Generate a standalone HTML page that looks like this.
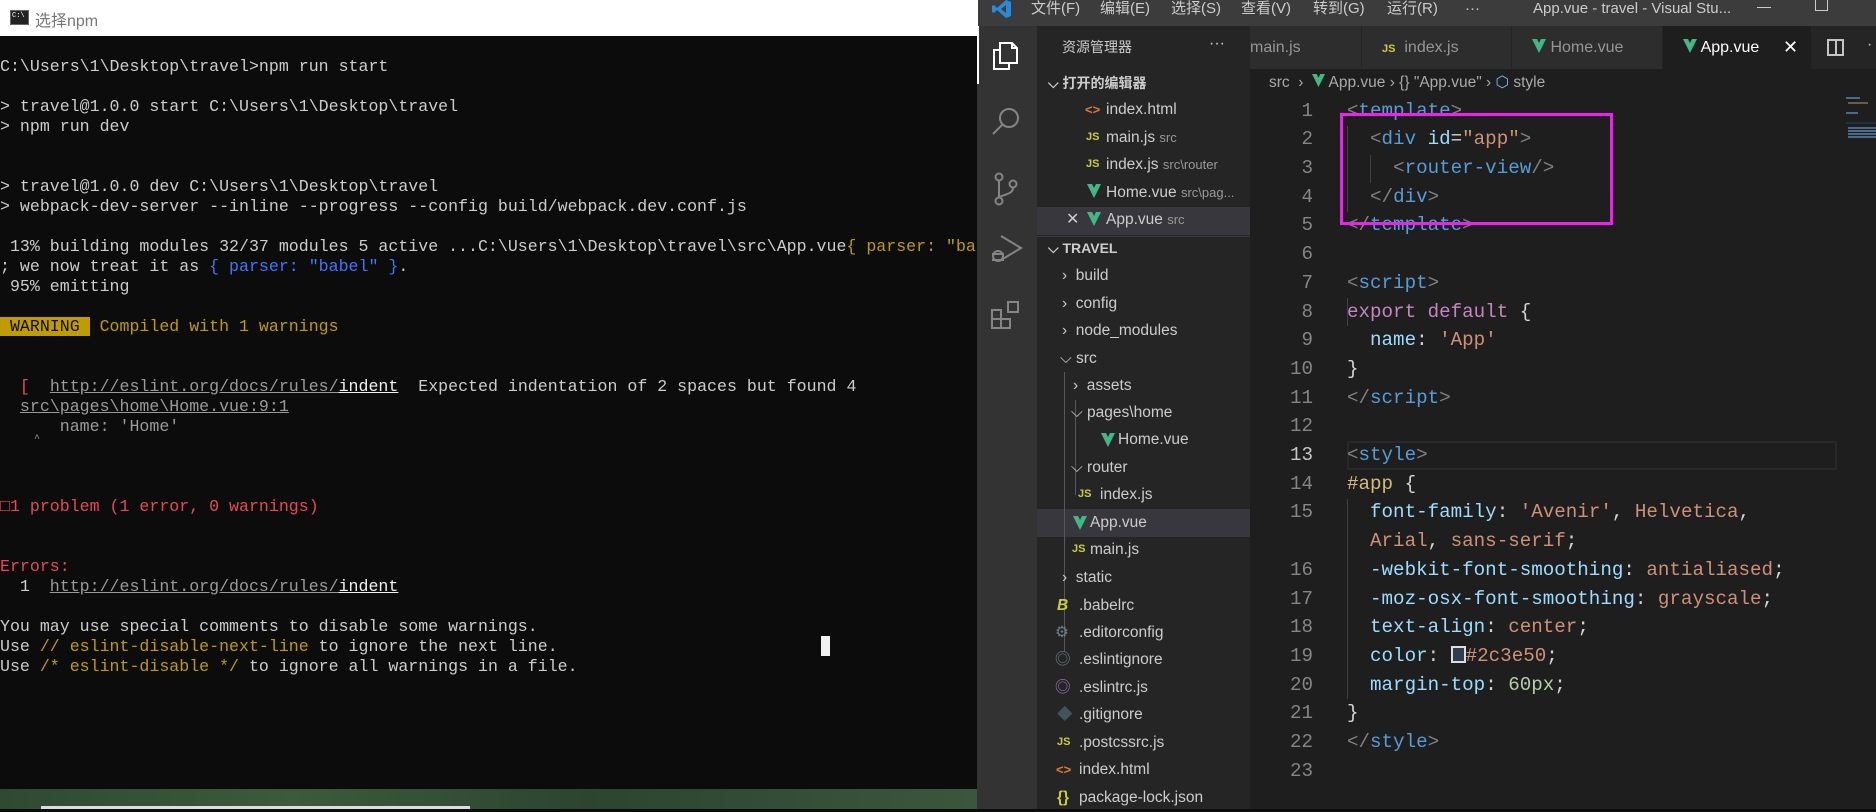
<!DOCTYPE html>
<html><head><meta charset="utf-8"><style>
*{margin:0;padding:0;box-sizing:border-box}
body{width:1876px;height:809px;overflow:hidden;background:#0c0c0c;position:relative;font-family:"Liberation Sans","Noto Sans CJK SC",sans-serif}
.abs{position:absolute}
#term{left:0;top:0;width:978px;height:809px;background:#0c0c0c}
#ttl{left:0;top:0;width:978px;height:36px;background:#fff}
pre.t{position:absolute;left:0;top:57px;font-family:"Liberation Mono","Noto Sans CJK SC",monospace;font-size:16.6px;line-height:20px;color:#cccccc;white-space:pre}
.y{color:#c19c00}.b{color:#3b78ff}.r{color:#e74856}.g{color:#9a9a9a}.u{text-decoration:underline}.w{color:#f2f2f2}
#vs{left:978px;top:0;width:898px;height:809px;background:#1e1e1e}
.row{position:absolute;height:27.5px;line-height:27.5px;font-size:15.5px;color:#cccccc;white-space:nowrap}
.js{font-family:"Liberation Sans",sans-serif;font-weight:bold;font-size:11px;color:#cbcb41}
.ht{color:#e37933;font-weight:bold;font-size:13px}
.code{position:absolute;left:1347px;top:96.6px;font-family:"Liberation Mono",monospace;font-size:19.2px;line-height:28.7px;color:#d4d4d4;white-space:pre}
.ln{position:absolute;left:1260px;width:53px;top:96.6px;text-align:right;font-family:"Liberation Mono",monospace;font-size:19.2px;line-height:28.7px;color:#858585;white-space:pre}
.p{color:#808080}.t{color:#569cd6}.a{color:#9cdcfe}.s{color:#ce9178}.k{color:#c586c0}.n{color:#b5cea8}.sel{color:#d7ba7d}
.tab{position:absolute;top:26px;height:43px;line-height:43px;font-size:16px;color:#969696;background:#2d2d2d;border-right:1px solid #252526}
.menu{position:absolute;top:0;height:26px;line-height:18px;font-size:15px;color:#cccccc}
</style></head><body>
<div id="term" class="abs">
<div id="ttl" class="abs">
 <div class="abs" style="left:10px;top:10px;width:19px;height:15px;background:#222;border:1px solid #666"><span style="position:absolute;left:1px;top:1px;font-size:7px;color:#fff;font-family:Liberation Mono">C:\</span></div>
 <div class="abs" style="left:35px;top:7px;font-size:16px;color:#777">选择npm</div>
</div>
<pre class="t">C:\Users\1\Desktop\travel&gt;npm run start

&gt; travel@1.0.0 start C:\Users\1\Desktop\travel
&gt; npm run dev


&gt; travel@1.0.0 dev C:\Users\1\Desktop\travel
&gt; webpack-dev-server --inline --progress --config build/webpack.dev.conf.js

 13% building modules 32/37 modules 5 active ...C:\Users\1\Desktop\travel\src\App.vue<span class="y">{ parser: "ba</span>
; we now treat it as <span class="b">{ parser: "babel" }</span>.
 95% emitting

<span style="background:#c19c00;color:#0c0c0c"> WARNING </span><span class="y"> Compiled with 1 warnings</span>


  <span class="r">[</span>  <span class="g u">http://eslint.org/docs/rules/</span><span class="w u">indent</span>  Expected indentation of 2 spaces but found 4
  <span class="g u">src\pages\home\Home.vue:9:1</span>
      <span class="g">name: 'Home'</span>



<span class="r">□1 problem (1 error, 0 warnings)</span>


<span class="r">Errors:</span>
  1  <span class="g u">http://eslint.org/docs/rules/</span><span class="w u">indent</span>

You may use special comments to disable some warnings.
Use <span class="y">// eslint-disable-next-line</span> to ignore the next line.
Use <span class="y">/* eslint-disable */</span> to ignore all warnings in a file.</pre>
<div class="abs" style="left:34px;top:434px;font-size:10px;color:#9a9a9a;font-family:Liberation Mono">^</div>
<div class="abs" style="left:821px;top:636px;width:9px;height:20px;background:#f2f2f2"></div>
<div class="abs" style="left:0;top:789px;width:978px;height:20px;background:linear-gradient(90deg,#2e4a32,#3d5a3a 30%,#2b4530 60%,#3a573c)"></div>
<div class="abs" style="left:41px;top:806px;width:429px;height:3px;background:#ddd"></div>
</div>

<div id="vs" class="abs">
<div class="abs" style="left:0;top:0;width:898px;height:26px;background:#3c3c3c"></div>
<svg class="abs" style="left:14px;top:0" width="20" height="18" viewBox="0 0 20 18"><path d="M14 0 L19 2 V16 L14 18 L5 10 L2 13 L0 12 V6 L2 5 L5 8 Z M14 5 L9 9 L14 13 Z" fill="#2b8ad8"/></svg>
</div>
<div class="menu" style="left:1031px">文件(F)</div>
<div class="menu" style="left:1100px">编辑(E)</div>
<div class="menu" style="left:1171px">选择(S)</div>
<div class="menu" style="left:1241px">查看(V)</div>
<div class="menu" style="left:1313px">转到(G)</div>
<div class="menu" style="left:1387px">运行(R)</div>
<div class="menu" style="left:1465px">···</div>
<div class="menu" style="left:1533px">App.vue - travel - Visual Stu...</div>
<div class="abs" style="left:1757px;top:7px;width:14px;height:1px;background:#ccc"></div>
<div class="abs" style="left:1815px;top:0px;width:13px;height:11px;border:1px solid #ccc;border-top:none"></div>

<div class="abs" style="left:977px;top:26px;width:60px;height:783px;background:#333333"></div>
<div class="abs" style="left:977px;top:26px;width:2px;height:58px;background:#fff"></div>
<svg class="abs" style="left:990px;top:40px" width="32" height="32" viewBox="0 0 32 32" fill="none" stroke="#fff" stroke-width="2"><path d="M10 3h12l5 5v15H10z M22 3v5h5"/><path d="M10 10H4v19h15v-6"/></svg>
<svg class="abs" style="left:990px;top:105px" width="32" height="32" viewBox="0 0 32 32" fill="none" stroke="#858585" stroke-width="2"><circle cx="19" cy="13" r="9"/><path d="M12.5 19.5L3 29"/></svg>
<svg class="abs" style="left:990px;top:172px" width="32" height="34" viewBox="0 0 32 34" fill="none" stroke="#858585" stroke-width="2"><circle cx="9" cy="5" r="3.5"/><circle cx="9" cy="29" r="3.5"/><circle cx="23" cy="12" r="3.5"/><path d="M9 9v16M23 16c0 5-6 6-14 9"/></svg>
<svg class="abs" style="left:990px;top:232px" width="34" height="34" viewBox="0 0 34 34" fill="none" stroke="#858585" stroke-width="2"><path d="M11 4L31 16L11 28"/><circle cx="8" cy="24" r="5"/><path d="M2 22h12M2 28h12"/></svg>
<svg class="abs" style="left:990px;top:300px" width="32" height="32" viewBox="0 0 32 32" fill="none" stroke="#858585" stroke-width="2"><rect x="2" y="10" width="9" height="9"/><rect x="2" y="19" width="9" height="9"/><rect x="11" y="19" width="9" height="9"/><rect x="18" y="2" width="10" height="10"/></svg>

<div class="abs" style="left:1037px;top:26px;width:213px;height:783px;background:#252526"></div>
<div class="row" style="left:1062px;top:34px;font-size:14px">资源管理器</div>
<div class="row" style="left:1209px;top:30px;font-size:16px">···</div>
<div class="row" style="left:1037px;top:207px;width:213px;background:#37373d"></div>
<div class="row" style="left:1037px;top:509px;width:213px;background:#37373d"></div>
<div class="abs" style="left:1037px;top:236px;width:213px;height:1px;background:#3c3c3c"></div>
<div class="abs" style="left:1064px;top:372px;width:1px;height:280px;background:#585858"></div>
<div class="abs" style="left:1075px;top:400px;width:1px;height:95px;background:#585858"></div>

<div class="row" style="left:1048px;top:70px;font-weight:bold;font-size:14px">⌵ 打开的编辑器</div>
<div class="row ht" style="left:1085px;top:96px">&lt;&gt;</div><div class="row" style="left:1106px;top:96px">index.html</div>
<div class="row js" style="left:1086px;top:124px">JS</div><div class="row" style="left:1106px;top:124px">main.js <span style="color:#999;font-size:13px">src</span></div>
<div class="row js" style="left:1086px;top:151px">JS</div><div class="row" style="left:1106px;top:151px">index.js <span style="color:#999;font-size:13px">src\router</span></div>
<svg class="abs" style="left:1087px;top:184px" width="14" height="14" viewBox="0 0 14 14"><path d="M0 0h5l2 4 2-4h5L7 14z" fill="#41b883"/></svg><div class="row" style="left:1106px;top:179px">Home.vue <span style="color:#999;font-size:13px">src\pag...</span></div>
<div class="row" style="left:1066px;top:206px;font-size:16px">✕</div>
<svg class="abs" style="left:1087px;top:212px" width="14" height="14" viewBox="0 0 14 14"><path d="M0 0h5l2 4 2-4h5L7 14z" fill="#41b883"/></svg><div class="row" style="left:1106px;top:206px">App.vue <span style="color:#999;font-size:13px">src</span></div>
<div class="row" style="left:1048px;top:235px;font-weight:bold;font-size:14px">⌵ TRAVEL</div>
<div class="row" style="left:1062px;top:262px">›&nbsp; build</div>
<div class="row" style="left:1062px;top:290px">›&nbsp; config</div>
<div class="row" style="left:1062px;top:317px">›&nbsp; node_modules</div>
<div class="row" style="left:1060px;top:345px">⌵ src</div>
<div class="row" style="left:1073px;top:372px">›&nbsp; assets</div>
<div class="row" style="left:1071px;top:399px">⌵ pages\home</div>
<svg class="abs" style="left:1101px;top:433px" width="14" height="14" viewBox="0 0 14 14"><path d="M0 0h5l2 4 2-4h5L7 14z" fill="#41b883"/></svg><div class="row" style="left:1118px;top:426px">Home.vue</div>
<div class="row" style="left:1071px;top:454px">⌵ router</div>
<div class="row js" style="left:1078px;top:481px">JS</div><div class="row" style="left:1100px;top:481px">index.js</div>
<svg class="abs" style="left:1073px;top:516px" width="14" height="14" viewBox="0 0 14 14"><path d="M0 0h5l2 4 2-4h5L7 14z" fill="#41b883"/></svg><div class="row" style="left:1090px;top:509px">App.vue</div>
<div class="row js" style="left:1072px;top:536px">JS</div><div class="row" style="left:1090px;top:536px">main.js</div>
<div class="row" style="left:1062px;top:564px">›&nbsp; static</div>
<div class="row" style="left:1057px;top:592px;color:#cbcb41;font-style:italic;font-weight:bold">B</div><div class="row" style="left:1079px;top:592px">.babelrc</div>
<div class="row" style="left:1055px;top:619px;color:#6d8086">⚙</div><div class="row" style="left:1079px;top:619px">.editorconfig</div>
<div class="row" style="left:1055px;top:646px;color:#6d8086">◎</div><div class="row" style="left:1079px;top:646px">.eslintignore</div>
<div class="row" style="left:1055px;top:674px;color:#a074c4">◎</div><div class="row" style="left:1079px;top:674px">.eslintrc.js</div>
<div class="row" style="left:1057px;top:701px;color:#41535b">◆</div><div class="row" style="left:1079px;top:701px">.gitignore</div>
<div class="row js" style="left:1057px;top:729px">JS</div><div class="row" style="left:1079px;top:729px">.postcssrc.js</div>
<div class="row ht" style="left:1056px;top:756px">&lt;&gt;</div><div class="row" style="left:1079px;top:756px">index.html</div>
<div class="row" style="left:1057px;top:784px;color:#cbcb41;font-weight:bold">{}</div><div class="row" style="left:1079px;top:784px">package-lock.json</div>

<div class="abs" style="left:1250px;top:26px;width:626px;height:43px;background:#252526"></div>
<div class="tab" style="left:1250px;width:112px"><span>main.js</span></div>
<div class="tab" style="left:1362px;width:150px;padding-left:20px"><span class="js">JS</span>&nbsp; index.js</div>
<div class="tab" style="left:1512px;width:151px;padding-left:20px"><svg width="14" height="14" viewBox="0 0 14 14" style="vertical-align:-1px"><path d="M0 0h5l2 4 2-4h5L7 14z" fill="#41b883"/></svg> Home.vue</div>
<div class="tab" style="left:1663px;width:149px;padding-left:20px;background:#1e1e1e;color:#fff"><svg width="14" height="14" viewBox="0 0 14 14" style="vertical-align:-1px"><path d="M0 0h5l2 4 2-4h5L7 14z" fill="#41b883"/></svg> App.vue<span style="position:absolute;left:120px;font-size:18px">✕</span></div>
<div class="abs" style="left:1827px;top:39px;width:17px;height:17px;border:2px solid #c5c5c5"></div>
<div class="abs" style="left:1835px;top:39px;width:2px;height:17px;background:#c5c5c5"></div>
<div class="abs" style="left:1867px;top:36px;color:#c5c5c5;font-size:16px">·</div>

<div class="row" style="left:1269px;top:69px;color:#a9a9a9;font-size:15.5px">src &nbsp;›&nbsp; <svg width="13" height="13" viewBox="0 0 14 14"><path d="M0 0h5l2 4 2-4h5L7 14z" fill="#41b883"/></svg> App.vue › {} "App.vue" › <span style="color:#75beff">⬡</span> style</div>

<div class="abs" style="left:1347px;top:441px;width:490px;height:29px;border:2px solid #282828"></div>
<div class="abs" style="left:1347px;top:126px;width:1px;height:86px;background:#404040"></div>
<div class="abs" style="left:1370px;top:155px;width:1px;height:28px;background:#404040"></div>
<div class="abs" style="left:1347px;top:499px;width:1px;height:200px;background:#404040"></div>
<div class="abs" style="left:1347px;top:298px;width:1px;height:28px;background:#404040"></div>
<div class="ln">1
2
3
4
5
6
7
8
9
10
11
12
<span style="color:#c6c6c6">13</span>
14
15

16
17
18
19
20
21
22
23</div>
<div class="code"><span class="p">&lt;</span><span class="t">template</span><span class="p">&gt;</span>
  <span class="p">&lt;</span><span class="t">div</span> <span class="a">id</span>=<span class="s">"app"</span><span class="p">&gt;</span>
    <span class="p">&lt;</span><span class="t">router-view</span><span class="p">/&gt;</span>
  <span class="p">&lt;/</span><span class="t">div</span><span class="p">&gt;</span>
<span class="p">&lt;/</span><span class="t">template</span><span class="p">&gt;</span>

<span class="p">&lt;</span><span class="t">script</span><span class="p">&gt;</span>
<span class="k">export</span> <span class="k">default</span> {
  <span class="a">name</span>: <span class="s">'App'</span>
}
<span class="p">&lt;/</span><span class="t">script</span><span class="p">&gt;</span>

<span class="p">&lt;</span><span class="t">style</span><span class="p">&gt;</span>
<span class="sel">#app</span> {
  <span class="a">font-family</span>: <span class="s">'Avenir'</span>, <span class="s">Helvetica</span>,
  <span class="s">Arial</span>, <span class="s">sans-serif</span>;
  <span class="a">-webkit-font-smoothing</span>: <span class="s">antialiased</span>;
  <span class="a">-moz-osx-font-smoothing</span>: <span class="s">grayscale</span>;
  <span class="a">text-align</span>: <span class="s">center</span>;
  <span class="a">color</span>: <span style="display:inline-block;width:15px;height:17px;border:2px solid #ddd;background:#2c3e50;vertical-align:-2px"></span><span class="s">#2c3e50</span>;
  <span class="a">margin-top</span>: <span class="n">60px</span>;
}
<span class="p">&lt;/</span><span class="t">style</span><span class="p">&gt;</span>
</div>
<div class="abs" style="left:1340px;top:113px;width:273px;height:112px;border:3px solid #f020f0"></div>
<div class="abs" style="left:1846px;top:97px;width:14px;height:2px;background:#4a6a8a"></div>
<div class="abs" style="left:1848px;top:102px;width:20px;height:2px;background:#6a5a4a"></div>
<div class="abs" style="left:1846px;top:112px;width:12px;height:2px;background:#4a6a8a"></div>
<div class="abs" style="left:1846px;top:122px;width:30px;height:2px;background:#1e3040"></div>
<div class="abs" style="left:1848px;top:127px;width:28px;height:12px;background:repeating-linear-gradient(#4a6a8a 0 2px,transparent 2px 3px)"></div>
</body></html>
